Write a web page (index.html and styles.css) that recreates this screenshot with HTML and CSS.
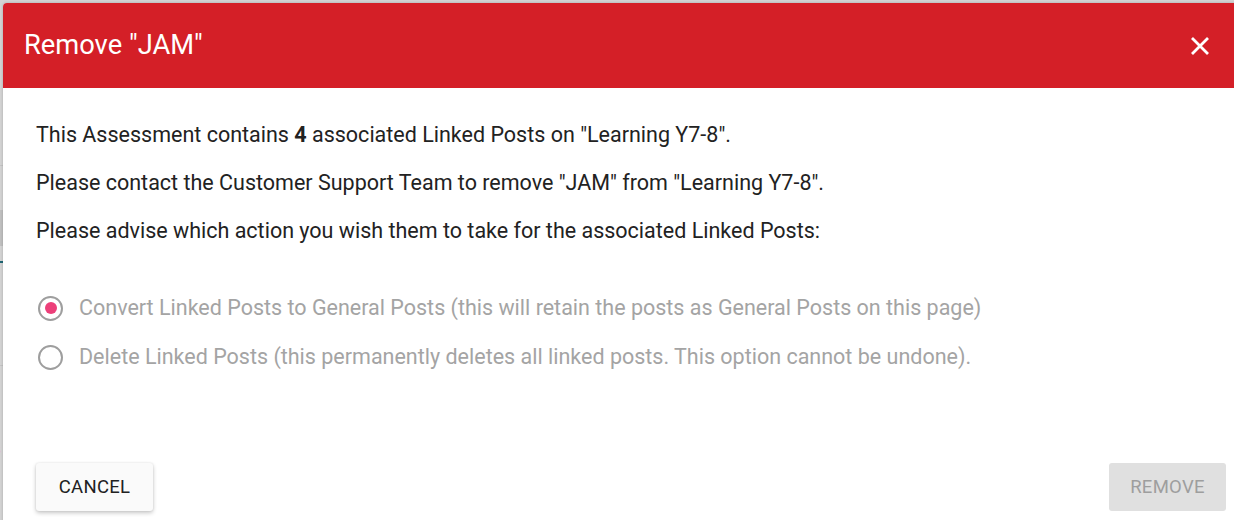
FILE: index.html
```html
<html>
  <head>
    <title>Remove Assessment</title>
    <link rel="stylesheet" href="styles.css">
  </head>
  <body>
    <div id="page">
      <div class="pageRule ruleTop"></div>
      <div class="pageBlock"></div>
      <div class="pageRule ruleTeal"></div>
      <div class="pageRule ruleLow"></div>
      <div class="pageError">s</div>
    </div>

    <div id="dialog">
      <div id="dialogHeader">
        <h1>Remove "JAM"</h1>
        <button id="closeButton" aria-label="Close">
          <svg width="20" height="20" viewBox="0 0 20 20">
            <path d="M2 2 18 18 M18 2 2 18" stroke="#fff" stroke-width="2.8" fill="none"/>
          </svg>
        </button>
      </div>

      <div id="dialogBody">
        <p>This Assessment contains <b>4</b> associated Linked Posts on "Learning Y7-8".</p>
        <p>Please contact the Customer Support Team to remove "JAM" from "Learning Y7-8".</p>
        <p>Please advise which action you wish them to take for the associated Linked Posts:</p>

        <div id="options">
          <label class="option">
            <span class="radio checked"></span>
            Convert Linked Posts to General Posts (this will retain the posts as General Posts on this page)
          </label>
          <label class="option">
            <span class="radio"></span>
            Delete Linked Posts (this permanently deletes all linked posts. This option cannot be undone).
          </label>
        </div>
      </div>

      <div id="dialogActions">
        <button id="cancelButton">Cancel</button>
        <button id="removeButton" disabled>Remove</button>
      </div>
    </div>
  </body>
</html>
```

FILE: styles.css
```css
body {
  margin: 0;
  width: 1234px;
  height: 520px;
  overflow: hidden;
  background-color: #d3d3d3;
  font-family: Roboto, "Liberation Sans", sans-serif;
  position: relative;
}

/* page behind the overlay, only the left edge shows */
#page {
  position: absolute;
  left: 0;
  top: 0;
  width: 40px;
  height: 520px;
}

.pageRule {
  position: absolute;
  left: 0;
  width: 40px;
  height: 1px;
  background-color: #c4c4c4;
}

.ruleTop {
  top: 165px;
}

.ruleTeal {
  top: 261px;
  height: 2px;
  background-color: #1f6674;
}

.ruleLow {
  top: 365px;
}

.pageBlock {
  position: absolute;
  left: 0;
  top: 210px;
  width: 40px;
  height: 36px;
  background-color: #c0c0c0;
}

.pageError {
  position: absolute;
  left: -8px;
  top: 438px;
  color: #e53935;
  font-size: 17px;
}

#dialog {
  position: absolute;
  left: 3px;
  top: 3px;
  width: 1240px;
  height: 530px;
  background-color: #fff;
  border-radius: 4px 0 0 0;
  box-shadow: 0 0 3px rgba(0, 0, 0, 0.2);
}

#dialogHeader {
  height: 85px;
  background-color: #d41f27;
  border-radius: 4px 0 0 0;
  display: flex;
  align-items: center;
  justify-content: space-between;
  padding: 0 24px 0 21px;
  box-sizing: border-box;
  width: 1231px;
}

#dialogHeader h1 {
  margin: 0;
  color: #fff;
  font-size: 27.3px;
  font-weight: 400;
  padding-bottom: 2px;
}

#closeButton {
  background: none;
  border: none;
  padding: 0;
  display: flex;
  cursor: pointer;
}

#dialogBody {
  padding: 33px 33px 0 33px;
  color: #222;
  font-size: 21.5px;
}

#dialogBody p {
  margin: 0 0 20px 0;
  line-height: 28px;
}

#options {
  padding-top: 29px;
  display: flex;
  flex-direction: column;
  gap: 21px;
}

.option {
  display: flex;
  align-items: center;
  gap: 16px;
  color: #a4a4a4;
  line-height: 28px;
  padding-left: 2px;
}

.radio {
  width: 21px;
  height: 21px;
  border: 2px solid #9e9e9e;
  border-radius: 50%;
  display: flex;
  align-items: center;
  justify-content: center;
  flex-shrink: 0;
}

.radio.checked::after {
  content: "";
  width: 12px;
  height: 12px;
  border-radius: 50%;
  background-color: #ec407a;
}

#dialogActions {
  position: absolute;
  left: 33px;
  top: 460px;
  width: 1190px;
  display: flex;
  justify-content: space-between;
}

#dialogActions button {
  width: 117px;
  height: 48px;
  border: none;
  border-radius: 3px;
  font-family: Roboto, "Liberation Sans", sans-serif;
  font-size: 18.5px;
  font-weight: 400;
  text-transform: uppercase;
  letter-spacing: 0.3px;
}

#cancelButton {
  background-color: #fafafa;
  color: #212121;
  box-shadow: 0 2px 4px rgba(0, 0, 0, 0.22), 0 0 2px rgba(0, 0, 0, 0.1);
  cursor: pointer;
}

#removeButton {
  background-color: #e0e0e0;
  color: #9e9e9e;
}
```
